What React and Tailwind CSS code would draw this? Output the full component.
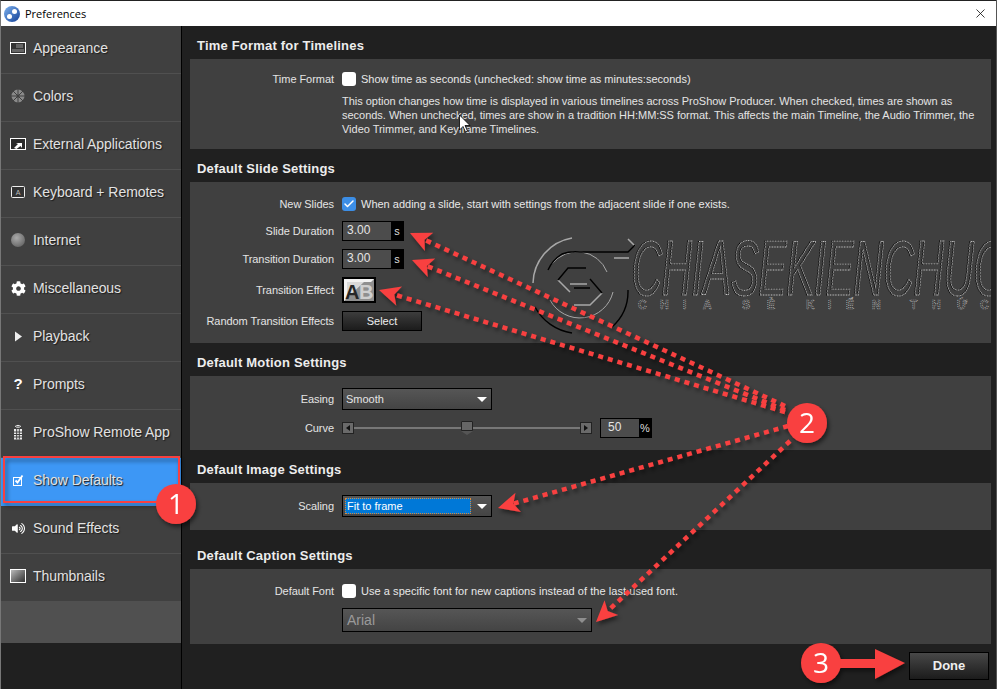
import { Check, X } from "lucide-react";
import { FaCog, FaVolumeUp } from "react-icons/fa";

const labelClass = "w-[144px] shrink-0 text-right text-[#e4e4e4] tracking-[-0.05px]";

function AppearanceIcon() {
  return (
    <svg width="16" height="12" viewBox="0 0 16 12">
      <rect x="0.5" y="0.5" width="15" height="11" fill="#333" stroke="#fff" />
      <rect x="2" y="7" width="12" height="3" fill="#666" />
      <rect x="6" y="2" width="7" height="4" fill="#666" />
    </svg>
  );
}

function ColorsIcon() {
  return (
    <svg width="14" height="14" viewBox="0 0 14 14">
      <circle cx="7" cy="7" r="6.5" fill="#8a8a8a" />
      <path d="M7 0v14M0 7h14M2 2l10 10M12 2L2 12" stroke="#404040" strokeWidth="1" />
      <circle cx="7" cy="7" r="1.5" fill="#404040" />
    </svg>
  );
}

function ExternalIcon() {
  return (
    <svg width="16" height="12" viewBox="0 0 16 12">
      <rect x="0.5" y="0.5" width="15" height="11" fill="#2a2a2a" stroke="#fff" />
      <path d="M4 10l4-4-2-1h6v5l-1.500-2-4 3z" fill="#fff" />
    </svg>
  );
}

function KeyboardIcon() {
  return (
    <svg width="14" height="12" viewBox="0 0 14 12">
      <rect x="0.5" y="0.5" width="13" height="11" rx="1" fill="#333" stroke="#eee" />
      <text x="7" y="8.500" textAnchor="middle" fontSize="7" fill="#bbb" fontFamily="Liberation Sans">A</text>
    </svg>
  );
}

function GlobeIcon() {
  return <div className="h-[14px] w-[14px] rounded-full bg-[radial-gradient(circle_at_40%_35%,#aaaaaa,#555555)]" />;
}

function PlayIcon() {
  return (
    <svg width="9" height="11" viewBox="0 0 9 11">
      <path d="M1 0.500l7 5-7 5z" fill="#eee" />
    </svg>
  );
}

function RemoteIcon() {
  return (
    <svg width="10" height="16" viewBox="0 0 10 16">
      <path d="M2 2.500q3-2.500 6 0M3.500 3.500q1.500-1 3 0" stroke="#eee" fill="none" />
      <rect x="1" y="5" width="8" height="10.500" fill="#eee" />
      <path d="M1 8h8M1 10.500h8M1 13h8M3.700 5v10.500M6.300 5v10.500" stroke="#404040" />
    </svg>
  );
}

function DefaultsIcon() {
  return (
    <svg width="11" height="11" viewBox="0 0 11 11">
      <rect x="0.500" y="2.500" width="8" height="8" fill="none" stroke="#fff" />
      <path d="M2.500 5.500l2 2 5-7" stroke="#fff" strokeWidth="1.800" fill="none" />
    </svg>
  );
}

function ThumbIcon() {
  return <div className="h-[14px] w-[16px] border border-white bg-gradient-to-br from-[#bbbbbb] to-[#333333]" />;
}

const navItems = [
  { label: "Appearance", icon: <AppearanceIcon /> },
  { label: "Colors", icon: <ColorsIcon /> },
  { label: "External Applications", icon: <ExternalIcon /> },
  { label: "Keyboard + Remotes", icon: <KeyboardIcon /> },
  { label: "Internet", icon: <GlobeIcon /> },
  { label: "Miscellaneous", icon: <FaCog className="text-[15px] text-white" /> },
  { label: "Playback", icon: <PlayIcon /> },
  { label: "Prompts", icon: <span className="text-[15px] font-bold text-white">?</span> },
  { label: "ProShow Remote App", icon: <RemoteIcon /> },
  { label: "Show Defaults", icon: <DefaultsIcon />, active: true },
  { label: "Sound Effects", icon: <FaVolumeUp className="text-[13px] text-white" /> },
  { label: "Thumbnails", icon: <ThumbIcon /> },
];

function NavItem({ label, icon, active }) {
  return (
    <div className={`flex h-[48px] items-center border-b pb-[3px] ${active ? "border-[#3d97f5] bg-[#3d97f5]" : "border-[#505050] bg-[#404040]"}`}>
      <div className="flex w-[32px] shrink-0 justify-center pl-[2px]">{icon}</div>
      <span className="text-[14px] tracking-[-0.05px] text-[#e2e2e2] [text-shadow:1px_1px_1px_#1c1c1c]">{label}</span>
    </div>
  );
}

function Section({ title, height, tall, children }) {
  return (
    <section>
      <h2 className={`flex items-end pb-[5px] pl-[7px] text-[13px] font-bold tracking-[0.2px] text-[#ededed] ${tall ? "h-[39px]" : "h-[33px]"}`}>
        {title}
      </h2>
      <div className={`bg-[#404040] ${height}`}>{children}</div>
    </section>
  );
}

function Row({ label, className = "", children }) {
  return (
    <div className={`flex items-center gap-[8px] ${className}`}>
      <span className={labelClass}>{label}</span>
      {children}
    </div>
  );
}

function Checkbox({ checked }) {
  return (
    <div className={`flex h-[14px] w-[14px] shrink-0 items-center justify-center rounded-[3px] ${checked ? "bg-[#3c8ee6]" : "bg-white"}`}>
      {checked && <Check size={12} strokeWidth={3} className="text-white" />}
    </div>
  );
}

function NumberField({ value, unit, width = "w-[62px]" }) {
  return (
    <div className={`flex h-[20px] items-stretch border border-black bg-black ${width}`}>
      <div className="flex-1 bg-[#4c4c4c] pl-[4px] text-[12px] leading-[17px] text-[#e4e4e4]">{value}</div>
      <div className="flex w-[12px] items-center justify-center text-[11px] text-[#ddd]">{unit}</div>
    </div>
  );
}

function Caret({ color = "border-t-white" }) {
  return <div className={`h-0 w-0 border-x-[5px] border-t-[5px] border-x-transparent ${color}`} />;
}

function Dropdown({ width, children, dim }) {
  return (
    <div className={`flex items-center justify-between border border-black bg-gradient-to-b from-[#565656] to-[#444444] ${width} ${dim ? "h-[24px]" : "h-[22px]"}`}>
      {children}
      <div className="mr-[4px]">
        <Caret color={dim ? "border-t-[#8f8f8f]" : "border-t-white"} />
      </div>
    </div>
  );
}

function SliderButton({ right }) {
  return (
    <div className="flex h-[12px] w-[12px] shrink-0 items-center justify-center border border-[#222] bg-[#6a6a6a]">
      <div className={`h-0 w-0 border-y-[3.500px] border-y-transparent ${right ? "border-l-[4px] border-l-[#111]" : "border-r-[4px] border-r-[#111]"}`} />
    </div>
  );
}

function Arrow({ x1, y1, x2, y2 }) {
  const angle = Math.atan2(y2 - y1, x2 - x1);
  const back = (dist, side) => [
    x2 - Math.cos(angle) * dist - Math.sin(angle) * side,
    y2 - Math.sin(angle) * dist + Math.cos(angle) * side,
  ];
  const points = [[x2, y2], back(21, 10), back(16, 0), back(21, -10)].map((p) => p.join(",")).join(" ");
  const [lx, ly] = back(16, 0);
  return (
    <g>
      <line x1={x1} y1={y1} x2={lx} y2={ly} stroke="#f9403f" strokeWidth="4.500" strokeDasharray="5 5" />
      <polygon points={points} fill="#f9403f" />
    </g>
  );
}

function Badge({ cx, cy, n }) {
  return (
    <g>
      <circle cx={cx} cy={cy} r="20" fill="#f9403f" />
      <text x={cx} y={cy + 10} textAnchor="middle" fontSize="28" fill="#fff" fontFamily="Open Sans, sans-serif">{n}</text>
    </g>
  );
}

function Watermark() {
  return (
    <g fill="none" clipPath="url(#panel-clip)">
      <path d="M572 238A47 47 0 0 0 533 283M628 239l7 7M614 258h15M558 280l12 12M570 284h17M602 293l-12 12h-16" stroke="#a8a8a8" strokeWidth="1.500" />
      <path d="M552 264A32 32 0 0 1 607 272M550 300A34 34 0 0 0 613 292" stroke="#a8a8a8" />
      <path d="M535 307A50 50 0 0 0 572 333M548 270A36 36 0 0 1 562 254Q570 251 580 252H628L635 245M628 290A48 48 0 0 1 612 327M558 280l10-12h18M574 288h16M590 279l12 14" stroke="#000" strokeWidth="1.400" />
      <text x="631" y="295" fontSize="78" fontStyle="italic" fontFamily="Liberation Sans" textLength="372" lengthAdjust="spacingAndGlyphs" stroke="#000" strokeWidth="1" strokeDasharray="2 1">CHIASEKIENCHUC</text>
      <text x="632" y="295" fontSize="78" fontStyle="italic" fontFamily="Liberation Sans" textLength="372" lengthAdjust="spacingAndGlyphs" stroke="#c8c8c8" strokeWidth="0.800" strokeDasharray="2 1">CHIASEKIENCHUC</text>
      <text y="309" fontSize="12" fontWeight="bold" fontFamily="Liberation Sans" stroke="#bbb" strokeWidth="0.700" strokeDasharray="1 1">
        <tspan x="638 660 683 703 742 767 806 828 846 872 910 932 957 980">CHIASẺKIẾNTHỨC</tspan>
      </text>
    </g>
  );
}

function Overlay() {
  return (
    <svg className="pointer-events-none absolute inset-0" width="997" height="689" viewBox="0 0 997 689">
      <defs>
        <clipPath id="panel-clip">
          <rect x="190" y="182" width="801" height="161" />
        </clipPath>
        <filter id="soft" x="-10%" y="-10%" width="120%" height="120%">
          <feDropShadow dx="2" dy="3" stdDeviation="2" floodColor="#000" floodOpacity="0.5" />
        </filter>
      </defs>
      <Watermark />
      <g filter="url(#soft)">
        <rect x="4" y="457" width="175" height="45" fill="none" stroke="#f9403f" strokeWidth="2" />
        <Arrow x1={785} y1={406} x2={410} y2={233} />
        <Arrow x1={785} y1={410} x2={412} y2={260} />
        <Arrow x1={785} y1={412} x2={379} y2={290} />
        <Arrow x1={788} y1={426} x2={498} y2={508} />
        <Arrow x1={790} y1={441} x2={596} y2={622} />
        <path d="M838 659h37v-10l30 14-30 16v-11h-37z" fill="#f9403f" />
        <Badge cx={176} cy={504} n="1" />
        <Badge cx={807} cy={423} n="2" />
        <Badge cx={821} cy={663} n="3" />
      </g>
      <path d="M459.500 115v15l3.500-3.500 2.500 5.500 2-1-2.500-5.500h5z" fill="#fff" stroke="#000" strokeWidth="0.800" />
    </svg>
  );
}

export default function App() {
  return (
    <div className="relative h-[689px] w-[997px] overflow-hidden border-r border-r-[#555] bg-[#202020] font-['Liberation_Sans',Arial,sans-serif] text-[11px] leading-[16px]">
      <header className="flex h-[26px] items-center border-t border-l border-t-[#222] border-l-[#777] bg-white pl-[3px]">
        <div className="relative h-[16px] w-[16px] rounded-full bg-gradient-to-br from-[#7fb2ee] to-[#123f96]">
          <div className="absolute top-[3px] left-[8px] h-[5px] w-[5px] rounded-full bg-white" />
          <div className="absolute top-[8px] left-[3px] h-[5px] w-[5px] rounded-full bg-white" />
        </div>
        <span className="ml-[5px] font-['Open_Sans',sans-serif] text-[11px] text-black">Preferences</span>
        <X size={15} strokeWidth={1.3} className="mr-[8px] ml-auto text-[#111]" />
      </header>

      <div className="flex h-[663px]">
        <div className="flex w-[182px] shrink-0 flex-col border-r border-l border-r-black border-l-[#777]">
          <nav>
            {navItems.map((item) => (
              <NavItem key={item.label} {...item} />
            ))}
          </nav>
          <div className="h-[41px] bg-[#505050]" />
        </div>

        <main className="ml-[8px] w-[801px]">
          <Section title="Time Format for Timelines" height="h-[90px]">
            <Row label="Time Format" className="pt-[12px]">
              <Checkbox />
              <span className="-ml-[3px] text-[#e8e8e8]">Show time as seconds (unchecked: show time as minutes:seconds)</span>
            </Row>
            <p className="mt-[7px] ml-[152px] leading-[14px] tracking-[-0.02px] whitespace-nowrap text-[#e4e4e4]">
              This option changes how time is displayed in various timelines across ProShow Producer. When checked, times are shown as
              <br />
              seconds. When unchecked, times are show in a tradition HH:MM:SS format. This affects the main Timeline, the Audio Trimmer, the
              <br />
              Video Trimmer, and Keyframe Timelines.
            </p>
          </Section>

          <Section title="Default Slide Settings" height="h-[161px]">
            <Row label="New Slides" className="pt-[14px]">
              <Checkbox checked />
              <span className="-ml-[3px] text-[#e8e8e8]">When adding a slide, start with settings from the adjacent slide if one exists.</span>
            </Row>
            <Row label="Slide Duration" className="mt-[9px]">
              <NumberField value="3.00" unit="s" />
            </Row>
            <Row label="Transition Duration" className="mt-[8px]">
              <NumberField value="3.00" unit="s" />
            </Row>
            <Row label="Transition Effect" className="mt-[8px]">
              <div className="h-[26px] w-[34px] border-2 border-black bg-black">
                <svg width="30" height="22" viewBox="0 0 30 22">
                  <rect width="30" height="22" fill="#8f8f8f" />
                  <path d="M0 0h30L27 3H3v16L0 22z" fill="#f2f2f2" />
                  <path d="M0 22L20 3H3v16z" fill="#d8d8d8" />
                  <text x="1" y="20" fontSize="20" fontWeight="bold" fontFamily="Liberation Sans" fill="#262626">A</text>
                  <text x="15" y="20" fontSize="20" fontWeight="bold" fontFamily="Liberation Sans" fill="#cfcfcf">B</text>
                </svg>
              </div>
            </Row>
            <Row label="Random Transition Effects" className="mt-[8px]">
              <button className="h-[20px] w-[80px] border border-black bg-gradient-to-b from-[#3d3d3d] to-[#1c1c1c] text-[11px] text-[#eee]">Select</button>
            </Row>
          </Section>

          <Section title="Default Motion Settings" height="h-[74px]">
            <Row label="Easing" className="pt-[12px]">
              <Dropdown width="w-[150px]">
                <span className="pl-[3px] text-[#e4e4e4]">Smooth</span>
              </Dropdown>
            </Row>
            <Row label="Curve" className="mt-[8px]">
              <div className="flex w-[250px] items-center">
                <SliderButton />
                <div className="relative h-[2px] flex-1 bg-[#777]">
                  <div className="absolute -top-[6px] left-[107px] h-[10px] w-[12px] rounded-t-[1px] border border-[#222] bg-[#666]" />
                  <div className="absolute top-[4px] left-[107px] h-0 w-0 border-x-[6px] border-t-[4px] border-x-transparent border-t-[#555]" />
                </div>
                <SliderButton right />
              </div>
              <NumberField value={<span className="pl-[3px]">50</span>} unit="%" width="w-[52px]" />
            </Row>
          </Section>

          <Section title="Default Image Settings" height="h-[47px]">
            <Row label="Scaling" className="pt-[12px]">
              <Dropdown width="w-[150px]">
                <span className="ml-[2px] h-[16px] w-[126px] border border-dotted border-[#d98a3a] bg-[#0078d7] pl-[1px] leading-[14px] text-white">Fit to frame</span>
              </Dropdown>
            </Row>
          </Section>

          <Section title="Default Caption Settings" height="h-[75px]" tall>
            <Row label="Default Font" className="pt-[14px]">
              <Checkbox />
              <span className="-ml-[3px] tracking-[0.05px] text-[#e8e8e8]">Use a specific font for new captions instead of the last used font.</span>
            </Row>
            <div className="mt-[9px] ml-[152px]">
              <Dropdown width="w-[250px]" dim>
                <span className="pl-[4px] text-[14px] text-[#9a9a9a]">Arial</span>
              </Dropdown>
            </div>
          </Section>

          <div className="flex justify-end pt-[8px] pr-[2px]">
            <button className="h-[28px] w-[80px] border border-black bg-gradient-to-b from-[#484848] to-[#1c1c1c] text-[13px] font-bold text-[#eee]">Done</button>
          </div>
        </main>
      </div>

      <Overlay />
    </div>
  );
}
